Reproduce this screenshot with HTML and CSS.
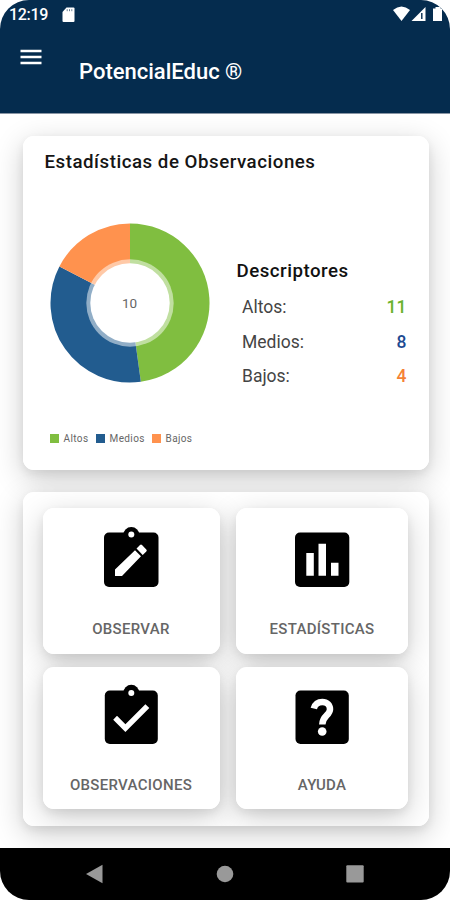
FILE: index.html
```html
<!DOCTYPE html>
<html lang="es">
<head>
<meta charset="utf-8">
<title>PotencialEduc</title>
<link rel="stylesheet" href="styles.css">
</head>
<body>
<div class="device">
  <header class="header">
    <div class="status">
      <span class="time">12:19</span>
      <svg class="sd" width="13" height="16" viewBox="0 0 13 16"><path d="M4.5 0.5H11.5Q12.5 .5 12.5 1.5V14Q12.5 15 11.5 15H1.5Q.5 15 .5 14V5Z" fill="#fff"/><path d="M5.2 2.2v2M7.5 2.2v2M9.8 2.2v2" stroke="#052c4e" stroke-width=".6"/></svg>
      <svg class="signals" width="57" height="18" viewBox="0 0 57 18">
        <path d="M0 4Q8.5-3 17 4L8.5 15Z" fill="#fff"/>
        <path d="M18.500 15L32.500 1V15Z" fill="#fff"/>
        <path d="M28.800 7V13" stroke="#052c4e" stroke-width="1.400"/>
        <path d="M40 2.500h2.500V1h5v1.500H49V15h-9z" fill="#fff"/>
      </svg>
    </div>
    <div class="toolbar">
      <svg class="menu" width="22" height="16" viewBox="0 0 22 16"><path d="M.5 2h21M.5 8h21M.5 14h21" stroke="#fff" stroke-width="2.500"/></svg>
      <h1 class="brand">PotencialEduc ®</h1>
    </div>
  </header>
  <main class="content">
    <section class="card stats">
      <h2 class="title">Estadísticas de Observaciones</h2>
      <div class="columns">
        <div class="chart">
          <svg class="donut" width="160" height="160" viewBox="-80 -80 160 160">
            <path d="M0 0V-79.500A79.500 79.500 0 0 1 10.830 78.760Z" fill="#80be40"/>
            <path d="M0 0L10.830 78.760A79.500 79.500 0 0 1 -70.590 -36.580Z" fill="#225c8f"/>
            <path d="M0 0L-70.590 -36.580A79.500 79.500 0 0 1 0 -79.500Z" fill="#ff924e"/>
            <circle r="43.700" fill="#fff" opacity=".5"/>
            <circle r="39.700" fill="#fff"/>
            <text class="count" x="-.5" y="4.800" text-anchor="middle">10</text>
          </svg>
          <div class="legend">
            <i class="swatch green"></i><span class="altos">Altos</span>
            <i class="swatch blue"></i><span class="medios">Medios</span>
            <i class="swatch orange"></i><span>Bajos</span>
          </div>
        </div>
        <div class="descriptors">
          <h3 class="subtitle">Descriptores</h3>
          <div class="row"><span>Altos:</span><b class="n-green">11</b></div>
          <div class="row"><span>Medios:</span><b class="n-blue">8</b></div>
          <div class="row"><span>Bajos:</span><b class="n-orange">4</b></div>
        </div>
      </div>
    </section>
    <section class="card panel">
      <div class="grid">
        <div class="tile">
          <svg width="55" height="62" viewBox="0 0 55 62">
            <rect y="7.500" width="54.500" height="54.500" rx="5"/>
            <circle cx="27.300" cy="10.300" r="8.200"/><circle cx="27.300" cy="9.500" r="3" fill="#fff"/>
            <path d="M11 44.500L31 25.200L37 31.200L18 51H11ZM32.500 23.600L36 20.100Q37 19.100 38 20.100L42.300 24.400Q43.300 25.400 42.300 26.400L38.700 29.900Z" fill="#fff"/>
          </svg>
          <span>OBSERVAR</span>
        </div>
        <div class="tile">
          <svg width="55" height="62" viewBox="0 0 55 62">
            <rect x="0" y="7.500" width="54.300" height="54.500" rx="5"/>
            <path d="M11.300 28h7.500v22.700h-7.500zM23.500 18.700h7.500v32h-7.500zM36 37.700h7.500v13H36z" fill="#fff"/>
          </svg>
          <span>ESTADÍSTICAS</span>
        </div>
        <div class="tile">
          <svg width="55" height="62" viewBox="0 0 55 62">
            <rect x=".8" y="8.500" width="53" height="53.500" rx="5"/>
            <circle cx="27.300" cy="10.800" r="8"/><circle cx="27.300" cy="11" r="3" fill="#fff"/>
            <path d="M9.200 37.700L13 33.800L21.400 42.200L41.400 22.200L45.300 26L21.400 50Z" fill="#fff"/>
          </svg>
          <span>OBSERVACIONES</span>
        </div>
        <div class="tile">
          <svg width="55" height="62" viewBox="0 0 55 62">
            <rect x=".5" y="8.500" width="53.300" height="53.500" rx="5"/>
            <path d="M18.800 26.500C19.800 22.300 23.200 19.900 27.300 19.900C32 19.900 35 23.200 35 27.200C35 33.500 27.300 33.500 27.300 42.500" fill="none" stroke="#fff" stroke-width="6.500"/>
            <circle cx="27.200" cy="49.500" r="4.300" fill="#fff"/>
          </svg>
          <span>AYUDA</span>
        </div>
      </div>
    </section>
  </main>
  <nav class="nav">
    <svg width="17" height="20" viewBox="0 0 17 20"><path d="M0 10L16.500 .7V19.300Z" fill="#999"/></svg>
    <svg width="18" height="20" viewBox="0 0 18 20"><circle cx="9" cy="10" r="8.300" fill="#999"/></svg>
    <svg width="18" height="20" viewBox="0 0 18 20"><rect x=".3" y="1.200" width="17.400" height="17.400" rx="1" fill="#999"/></svg>
  </nav>
</div>
</body>
</html>
```
FILE: styles.css
```css
* { box-sizing: border-box; }
body { margin: 0; background: #fff; font-family: Roboto, sans-serif; }
h1, h2, h3 { margin: 0; font-weight: 500; white-space: nowrap; }
svg { display: block; flex: none; }
.device {
  width: 450px; height: 900px; display: flex; flex-direction: column;
  overflow: hidden; border-radius: 29px; background: #fff;
}
.header { height: 114px; flex: none; background: #052c4e; border-bottom: 1px solid #8995a4; color: #fff; }
.status { height: 29px; display: flex; align-items: center; padding-left: 9px; }
.time { width: 53px; font-size: 16px; font-weight: 500; line-height: 28px; letter-spacing: -.3px; }
.signals { margin-left: auto; margin-right: 0; }
.toolbar { display: flex; padding-left: 20px; }
.menu { margin-top: 20px; }
.brand { margin: 28px 0 0 37px; font-size: 22px; line-height: 30px; }
.content { height: 734px; flex: none; padding: 22px 21.5px 22px 22.5px; display: flex; flex-direction: column; gap: 22px; overflow: hidden; isolation: isolate; }
.card { height: 334px; flex: none; background: #fff; border-radius: 11px; position: relative; }
.card::before, .tile::before {
  content: ""; position: absolute; inset: 0; z-index: -1; border-radius: 11px;
  box-shadow: 0 8px 30px rgba(0,0,0,.2), 0 4px 10px rgba(0,0,0,.07);
}
.stats { padding: 13.500px 21px 0 22px; }
.title { font-size: 18.7px; line-height: 24px; letter-spacing: .52px; color: #151515; }
.columns { display: flex; }
.chart { width: 192px; padding: 49px 0 0 5px; }
.count { font-size: 13.500px; fill: #666; }
.legend { margin-top: 48.500px; display: flex; align-items: center; height: 14px; font-size: 10px; letter-spacing: .4px; color: #666; }
.swatch { width: 9px; height: 9px; margin-right: 5px; }
.altos { width: 32px; }
.medios { width: 42px; }
.swatch.green { background: #80be40; }
.swatch.blue { background: #225c8f; }
.swatch.orange { background: #ff924e; }
.descriptors { flex: 1; padding-top: 85.500px; }
.subtitle { font-size: 18.700px; line-height: 24px; letter-spacing: .5px; color: #111; margin-bottom: 7px; }
.row { height: 34.500px; display: flex; justify-content: space-between; align-items: center; padding-left: 5.500px; font-size: 17.500px; color: #444; }
.row b { font-weight: 500; margin-right: 1px; }
.n-green { color: #6ab22c; }
.n-blue { color: #1d4a91; }
.n-orange { color: #f58235; }
.grid { height: 100%; display: grid; grid-template-columns: 177px 172px; grid-template-rows: 146px 142px; gap: 13px 16.500px; padding: 16px 20px; overflow: hidden; border-radius: 11px; isolation: isolate; }
.tile { position: relative; background: #fff; border-radius: 11px; display: flex; flex-direction: column; align-items: center; padding-top: 17px; }
.tile:nth-child(n+3) { padding-top: 15px; }
.tile span { margin-top: 32px; font-size: 15px; line-height: 20px; letter-spacing: .3px; font-weight: 500; color: #666; }
.tile:nth-child(n+3) span { margin-top: 31px; }
.nav { height: 52px; flex: none; background: #000; display: flex; align-items: center; justify-content: space-between; padding: 0 86px; }
```
